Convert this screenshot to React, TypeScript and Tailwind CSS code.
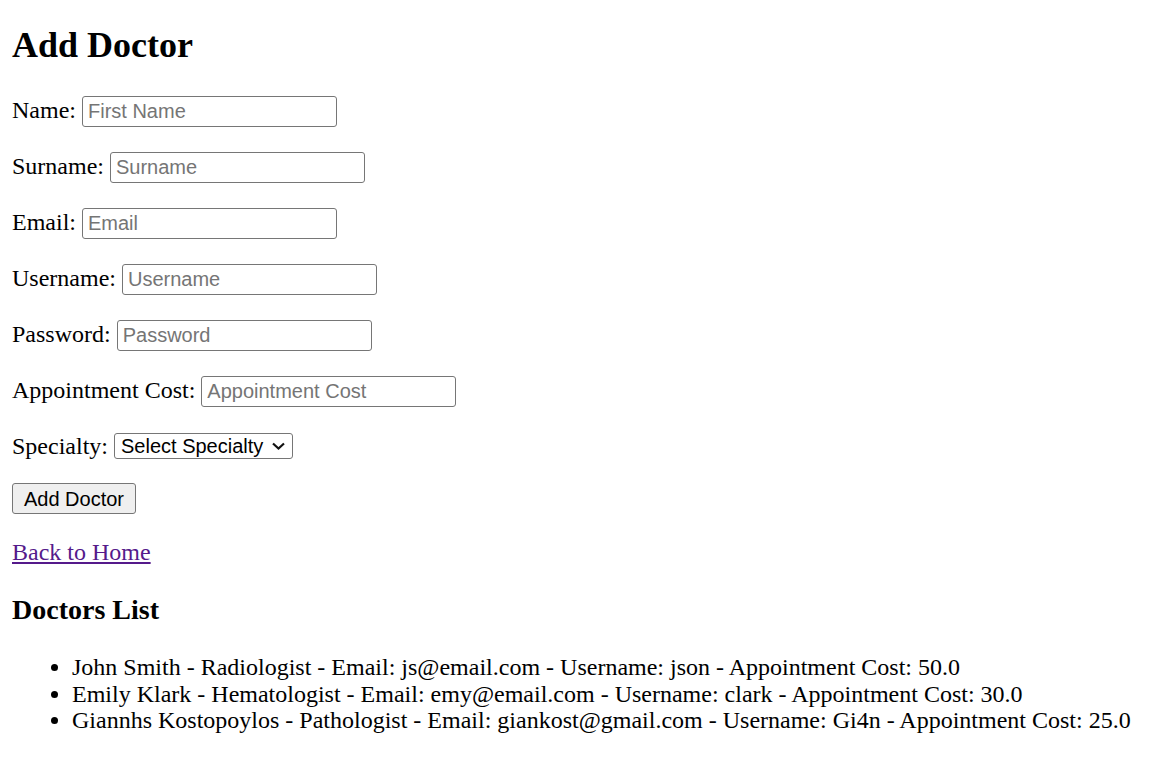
import React from "react";

const serif = { fontFamily: '"Liberation Serif", "Times New Roman", serif' };

function Field({ label, placeholder, type = "text" }: { label: string; placeholder: string; type?: string }) {
  return (
    <div className="flex h-[32px] items-baseline">
      <label className="leading-[27px]">{label}</label>
      <input
        type={type}
        placeholder={placeholder}
        className="ml-[6px] h-[31px] w-[255px] rounded-[3px] border border-[#767676] bg-white px-[5px] text-[20px] text-black placeholder:text-[#757575] outline-none"
        style={{ fontFamily: '"Liberation Sans", Arial, sans-serif' }}
      />
    </div>
  );
}

const doctors = [
  "John Smith - Radiologist - Email: js@email.com - Username: json - Appointment Cost: 50.0",
  "Emily Klark - Hematologist - Email: emy@email.com - Username: clark - Appointment Cost: 30.0",
  "Giannhs Kostopoylos - Pathologist - Email: giankost@gmail.com - Username: Gi4n - Appointment Cost: 25.0",
];

export default function App() {
  return (
    <div className="min-h-screen bg-white px-[12px] text-[24px] text-black" style={serif}>
      <h2 className="pt-[25px] text-[36px] font-bold leading-[41px]">Add Doctor</h2>

      <form className="mt-[30px] flex flex-col" onSubmit={(e) => e.preventDefault()}>
        <div className="flex flex-col gap-[24px]">
          <Field label="Name:" placeholder="First Name" />
          <Field label="Surname:" placeholder="Surname" />
          <Field label="Email:" placeholder="Email" type="email" />
          <Field label="Username:" placeholder="Username" />
          <Field label="Password:" placeholder="Password" type="password" />
          <Field label="Appointment Cost:" placeholder="Appointment Cost" />
          <div className="flex h-[28px] items-center">
            <label className="leading-[27px]">Specialty:</label>
            <div
              className="ml-[6px] flex h-[26px] items-center rounded-[3px] border border-[#767676] bg-white pl-[6px] pr-[6px] text-[20px] text-black"
              style={{ fontFamily: '"Liberation Sans", Arial, sans-serif' }}
            >
              <select className="appearance-none bg-transparent leading-[22px] outline-none">
                <option>Select Specialty</option>
                <option>Radiologist</option>
                <option>Hematologist</option>
                <option>Pathologist</option>
              </select>
              <svg width="15" height="10" viewBox="0 0 15 10" className="ml-[7px]">
                <path d="M2 2.5 L7.5 7.5 L13 2.5" fill="none" stroke="#111" strokeWidth="2.2" />
              </svg>
            </div>
          </div>
        </div>
        <div className="mt-[23px] flex">
          <button
            type="submit"
            className="h-[31px] w-[124px] rounded-[3px] border border-[#767676] bg-[#efefef] text-[20px] text-black"
            style={{ fontFamily: '"Liberation Sans", Arial, sans-serif' }}
          >
            Add Doctor
          </button>
        </div>
      </form>

      <p className="mt-[25px] leading-[27px]">
        <a href="#" className="text-[#551a8b] underline">
          Back to Home
        </a>
      </p>

      <h3 className="mt-[28px] text-[28px] font-bold leading-[32px]">Doctors List</h3>

      <ul className="mt-[28px] list-disc pl-[60px]">
        {doctors.map((d) => (
          <li key={d} className="leading-[26.5px]">
            {d}
          </li>
        ))}
      </ul>
    </div>
  );
}
